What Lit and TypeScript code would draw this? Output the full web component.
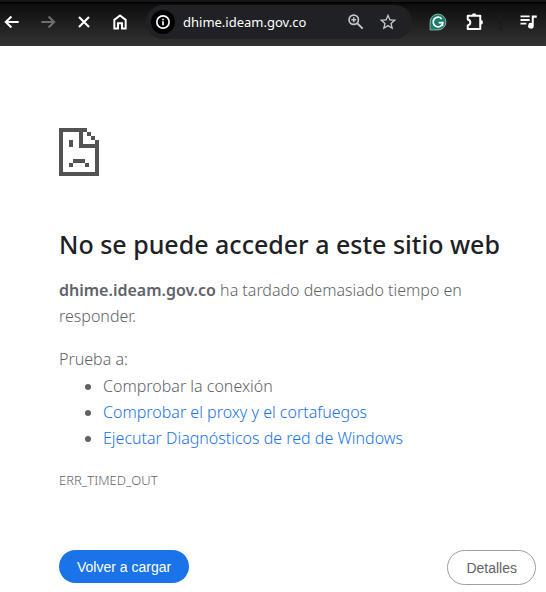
import { LitElement, html, css, svg } from "lit";
import { customElement } from "lit/decorators.js";

const icon = (content: unknown, box = "0 0 24 24") =>
  html`<svg class="icon" viewBox=${box} aria-hidden="true">${content}</svg>`;

const icons = {
  back: icon(svg`<path fill="currentColor" d="M20 10.8H7.6l4.6-4.6L10.4 4.4 2.8 12l7.6 7.6 1.8-1.8-4.6-4.6H20z"/>`),
  forward: icon(svg`<path fill="currentColor" d="M4 10.8h12.4l-4.6-4.6 1.8-1.8 7.6 7.6-7.6 7.6-1.8-1.8 4.6-4.6H4z"/>`),
  stop: icon(svg`<path fill="none" stroke="currentColor" stroke-width="2.5" d="M6 6l12 12M18 6L6 18"/>`),
  home: icon(svg`<path fill="none" stroke="currentColor" stroke-width="2.4" d="M5.2 9.4 12 4.2l6.8 5.2v10.4h-4.4v-6.4H9.6v6.4H5.2z"/>`),
  info: icon(svg`<circle cx="12" cy="12" r="7.4" fill="none" stroke="currentColor" stroke-width="2"/><path fill="currentColor" d="M11 11h2v5h-2zM11 8h2v2h-2z"/>`),
  zoom: icon(svg`<g fill="none" stroke="currentColor"><circle cx="9.3" cy="9.3" r="5.6" stroke-width="2"/><path stroke-width="2.4" d="M13.6 13.6l6.4 6.4"/><path stroke-width="1.8" d="M6.4 9.3h5.8M9.3 6.4v5.8"/></g>`),
  star: icon(svg`<path fill="currentColor" d="M22 9.24l-7.19-.62L12 2 9.19 8.63 2 9.24l5.46 4.73L5.82 21 12 17.27 18.18 21l-1.63-7.03L22 9.24zM12 15.4l-3.76 2.27 1-4.28-3.32-2.88 4.38-.38L12 6.1l1.71 4.04 4.38.38-3.32 2.88 1 4.28L12 15.4z"/>`),
  grammar: icon(svg`<path fill="#14806c" stroke="#a9b8b3" stroke-width="1" d="M12 2.5a9.5 9.5 0 1 1 0 19H2.5V12A9.5 9.5 0 0 1 12 2.5z"/><path fill="none" stroke="#fff" stroke-width="2.1" d="M16.4 8.2A5.8 5.8 0 1 0 17.8 12.8H12.8M17.3 12.8v4"/>`),
  puzzle: icon(svg`<path fill="none" stroke="currentColor" stroke-width="2.4" stroke-linejoin="round" d="M4.5 4.5H19.5V20.5H4.5V16C6.5 15.4 7.6 14.2 7.6 12.5S6.5 9.6 4.5 9z"/><path fill="currentColor" d="M9.5 4a2.6 2.6 0 0 1 5.2 0zM20 9.6a2.8 2.8 0 0 1 0 5.6z"/>`),
  media: icon(svg`<path fill="currentColor" d="M3 4.2h11v2.2H3zM3 8.5h11v2.2H3zM3 12.8h7V15H3zM16.5 4.2h6v2.6h-3.6v9.7A3.4 3.4 0 1 1 16.5 13.3z"/>`),
};

@customElement("app-root")
export class AppRoot extends LitElement {
  static styles = css`
    :host {
      display: block;
      min-height: 100vh;
      background: #fff;
      color: #5f6368;
      font: 350 16px/26px "Noto Sans", "Open Sans", sans-serif;
    }
    button {
      border: 0;
      margin: 0;
      padding: 0;
      font: inherit;
      color: inherit;
      background: none;
      cursor: pointer;
    }
    .toolbar {
      display: flex;
      align-items: center;
      box-sizing: border-box;
      height: 46px;
      padding: 5px 8px 7px 2px;
      color: #fff;
      background: linear-gradient(#161616 0 2px, #000 2px 3px, #0d0d0d 4px, #333 46px);
    }
    .group {
      display: flex;
      align-items: center;
      gap: 16px;
    }
    .omnibox .group { gap: 12px; }
    .tool {
      display: flex;
      width: 20px;
      height: 20px;
      flex: none;
    }
    .tool:disabled { color: #6e6e6e; }
    .icon {
      display: block;
      width: 20px;
      height: 20px;
    }
    .omnibox {
      display: flex;
      align-items: center;
      flex: 1;
      min-width: 0;
      height: 34px;
      margin: 0 16px;
      padding: 0 14px 0 5px;
      box-sizing: border-box;
      border-radius: 17px;
      background: #202124;
      color: #c4c5c8;
    }
    .site {
      display: flex;
      align-items: center;
      justify-content: center;
      width: 24px;
      height: 24px;
      flex: none;
      border-radius: 50%;
      background: #000;
      color: #fff;
    }
    .address {
      flex: 1;
      min-width: 0;
      height: 24px;
      margin: 0 8px;
      padding: 0;
      border: 0;
      outline: 0;
      background: none;
      color: #fff;
      font: 400 13px/24px "Noto Sans", "Open Sans", sans-serif;
    }
    .divider {
      width: 2px;
      height: 16px;
      background: #1b1b1b;
    }
    .page {
      max-width: 600px;
      margin: 0 auto;
      padding: 82px 10px 0 59px;
    }
    .sad {
      display: block;
      width: 40px;
      height: 48px;
      fill: #535353;
    }
    h1 {
      margin: 50px 0 15px;
      color: #202124;
      font-size: 25px;
      line-height: 36px;
      font-weight: 500;
    }
    p { margin: 0; }
    strong { font-weight: 600; }
    .summary { max-width: 440px; }
    .try { margin-top: 17px; }
    ul {
      margin: 1px 0 0;
      padding-left: 44px;
    }
    a {
      color: #1a73e8;
      text-decoration: none;
    }
    .code {
      margin-top: 16px;
      font-size: 13px;
    }
    .actions {
      display: flex;
      justify-content: space-between;
      align-items: flex-start;
      margin-top: 57px;
    }
    .reload, .details {
      box-sizing: border-box;
      border-radius: 18px;
      padding: 9px 18px 8px;
      font: 14px/16px "Liberation Sans", Arial, sans-serif;
    }
    .reload {
      color: #fff;
      background: #1a73e8;
    }
    .details { border: 1px solid #9aa0a6; }
  `;

  render() {
    return html`
      <header class="toolbar">
        <nav class="group">
          <button class="tool" aria-label="Atrás">${icons.back}</button>
          <button class="tool" aria-label="Adelante" disabled>${icons.forward}</button>
          <button class="tool" aria-label="Detener">${icons.stop}</button>
          <button class="tool" aria-label="Inicio">${icons.home}</button>
        </nav>
        <div class="omnibox">
          <button class="site" aria-label="Información del sitio">${icons.info}</button>
          <input class="address" type="text" aria-label="Dirección" .value=${"dhime.ideam.gov.co"} />
          <div class="group">
            <button class="tool" aria-label="Zoom">${icons.zoom}</button>
            <button class="tool" aria-label="Favoritos">${icons.star}</button>
          </div>
        </div>
        <div class="group">
          <button class="tool" aria-label="Corrector">${icons.grammar}</button>
          <button class="tool" aria-label="Extensiones">${icons.puzzle}</button>
          <span class="divider"></span>
          <button class="tool" aria-label="Multimedia">${icons.media}</button>
        </div>
      </header>
      <main class="page">
        <svg class="sad" viewBox="0 0 40 48" shape-rendering="crispEdges" aria-hidden="true">
          <path d="M0 0H28V4H24V16H40V48H0zM4 4V44H36V20H20V4z" fill-rule="evenodd" />
          <path d="M28 4h4v4h-4zM32 8h4v4h-4zM36 12h4v4h-4zM10 12h4v7h-4zM14 31h12v4H14zM10 35h4v4h-4zM26 35h4v4h-4z" />
        </svg>
        <h1>No se puede acceder a este sitio web</h1>
        <p class="summary"><strong>dhime.ideam.gov.co</strong> ha tardado demasiado tiempo en responder.</p>
        <p class="try">Prueba a:</p>
        <ul>
          <li>Comprobar la conexión</li>
          <li><a href="#proxy">Comprobar el proxy y el cortafuegos</a></li>
          <li><a href="#diagnostico">Ejecutar Diagnósticos de red de Windows</a></li>
        </ul>
        <p class="code">ERR_TIMED_OUT</p>
        <div class="actions">
          <button class="reload">Volver a cargar</button>
          <button class="details">Detalles</button>
        </div>
      </main>
    `;
  }
}
